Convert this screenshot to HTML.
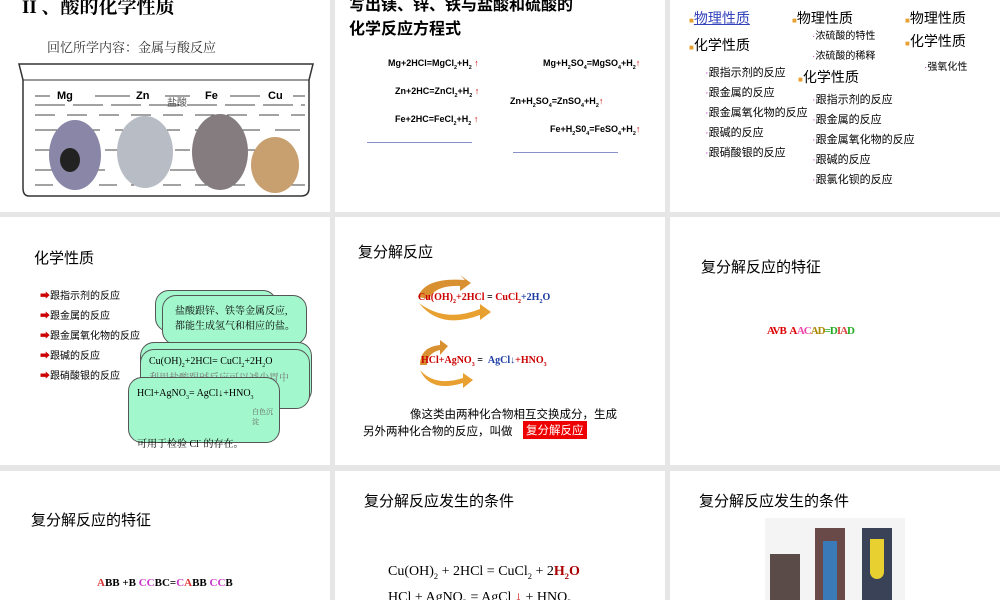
<!DOCTYPE html>
<html><head><meta charset="utf-8"><style>
body{margin:0;width:1000px;height:600px;background:#e6e6e6;position:relative;overflow:hidden;font-family:"Liberation Sans","Noto Sans CJK SC",sans-serif;}
.p{position:absolute;background:#fff;overflow:hidden}
.a{position:absolute;white-space:nowrap}
.serif{font-family:"Liberation Serif","Noto Serif CJK SC",serif}
sub{font-size:60%}
.bub{position:absolute;background:#a3f7cc;border:1px solid #555;border-radius:14px}
</style></head><body>
<!-- row1 -->
<div class="p" style="left:0;top:0;width:330px;height:212px">
 <div class="a serif" style="left:22px;top:-8px;font-size:19px;font-weight:bold">II 、酸的化学性质</div>
 <div class="a serif" style="left:47px;top:37px;font-size:13px;color:#333">回忆所学内容：金属与酸反应</div>
 <svg class="a" style="left:15px;top:60px" width="300" height="140">
  <path d="M4 4 L298 4 L294 20 L294 128 Q294 136 286 136 L14 136 Q8 136 8 128 L8 20 Z" fill="#fff" stroke="#333" stroke-width="1.5"/>
  <line x1="8" y1="20" x2="294" y2="20" stroke="#333"/>
  <g stroke="#444" stroke-width="1">
   <line x1="20" y1="36" x2="35" y2="36"/><line x1="80" y1="36" x2="115" y2="36"/><line x1="150" y1="36" x2="175" y2="36"/><line x1="215" y1="36" x2="245" y2="36"/><line x1="278" y1="36" x2="290" y2="36"/>
   <line x1="20" y1="45" x2="290" y2="45" stroke-dasharray="30 8"/><line x1="20" y1="55" x2="290" y2="55" stroke-dasharray="20 12"/>
   <line x1="20" y1="70" x2="290" y2="70" stroke-dasharray="25 15"/><line x1="20" y1="90" x2="290" y2="90" stroke-dasharray="15 20"/><line x1="20" y1="110" x2="290" y2="110" stroke-dasharray="25 20"/><line x1="20" y1="125" x2="290" y2="125" stroke-dasharray="18 14"/>
  </g>
  <text x="42" y="39" font-size="11" font-weight="bold" font-family="Liberation Sans">Mg</text>
  <text x="121" y="39" font-size="11" font-weight="bold" font-family="Liberation Sans">Zn</text>
  <text x="190" y="39" font-size="11" font-weight="bold" font-family="Liberation Sans">Fe</text>
  <text x="253" y="39" font-size="11" font-weight="bold" font-family="Liberation Sans">Cu</text>
  <text x="152" y="46" font-size="10" fill="#555" font-family="Noto Sans CJK SC">盐酸</text>
  <ellipse cx="60" cy="95" rx="26" ry="35" fill="#8a86a8"/>
  <ellipse cx="130" cy="92" rx="28" ry="36" fill="#b8bcc4"/>
  <ellipse cx="205" cy="92" rx="28" ry="38" fill="#857c80"/>
  <ellipse cx="260" cy="105" rx="24" ry="28" fill="#c8a070"/>
  <ellipse cx="55" cy="100" rx="10" ry="12" fill="#222"/>
 </svg>
</div>
<div class="p" style="left:335px;top:0;width:330px;height:212px">
 <div class="a" style="left:14px;top:-6px;font-size:16px;font-weight:bold;line-height:24px">写出镁、锌、铁与盐酸和硫酸的<br>化学反应方程式</div>
 <div class="a" style="left:53px;top:58px;font-size:9px;font-weight:bold">Mg+2HCl=MgCl<sub>2</sub>+H<sub>2</sub> <span style="color:#c00">↑</span></div>
 <div class="a" style="left:208px;top:58px;font-size:9px;font-weight:bold">Mg+H<sub>2</sub>SO<sub>4</sub>=MgSO<sub>4</sub>+H<sub>2</sub><span style="color:#c00">↑</span></div>
 <div class="a" style="left:60px;top:86px;font-size:9px;font-weight:bold">Zn+2HC=ZnCl<sub>2</sub>+H<sub>2</sub> <span style="color:#c00">↑</span></div>
 <div class="a" style="left:175px;top:96px;font-size:9px;font-weight:bold">Zn+H<sub>2</sub>SO<sub>4</sub>=ZnSO<sub>4</sub>+H<sub>2</sub><span style="color:#c00">↑</span></div>
 <div class="a" style="left:60px;top:114px;font-size:9px;font-weight:bold">Fe+2HC=FeCl<sub>2</sub>+H<sub>2</sub> <span style="color:#c00">↑</span></div>
 <div class="a" style="left:215px;top:124px;font-size:9px;font-weight:bold">Fe+H<sub>2</sub>S0<sub>4</sub>=FeSO<sub>4</sub>+H<sub>2</sub><span style="color:#c00">↑</span></div>
 <div class="a" style="left:32px;top:142px;width:105px;height:1px;background:#8890c8"></div>
 <div class="a" style="left:178px;top:152px;width:105px;height:1px;background:#8890c8"></div>
</div>
<div class="p" style="left:670px;top:0;width:330px;height:212px;font-size:14px">
 <div class="a" style="left:19px;top:8px;font-size:14px"><span style="color:#e8a030;font-size:8px">■</span><span style="color:#3344bb;text-decoration:underline">物理性质</span></div>
 <div class="a" style="left:19px;top:35px"><span style="color:#e8a030;font-size:8px">■</span>化学性质</div>
 <div class="a" style="left:35px;top:63px;font-size:11px;line-height:20px"><span style="color:#c4c">·</span>跟指示剂的反应<br><span style="color:#c4c">·</span>跟金属的反应<br><span style="color:#c4c">·</span>跟金属氧化物的反应<br><span style="color:#c4c">·</span>跟碱的反应<br><span style="color:#c4c">·</span>跟硝酸银的反应</div>
 <div class="a" style="left:122px;top:8px"><span style="color:#e8a030;font-size:8px">■</span>物理性质</div>
 <div class="a" style="left:142px;top:27px;font-size:10px;line-height:20px"><span style="color:#c4c">·</span>浓硫酸的特性<br><span style="color:#c4c">·</span>浓硫酸的稀释</div>
 <div class="a" style="left:128px;top:67px"><span style="color:#e8a030;font-size:8px">■</span>化学性质</div>
 <div class="a" style="left:142px;top:90px;font-size:11px;line-height:20px"><span style="color:#c4c">·</span>跟指示剂的反应<br><span style="color:#c4c">·</span>跟金属的反应<br><span style="color:#c4c">·</span>跟金属氧化物的反应<br><span style="color:#c4c">·</span>跟碱的反应<br><span style="color:#c4c">·</span>跟氯化钡的反应</div>
 <div class="a" style="left:235px;top:8px"><span style="color:#e8a030;font-size:8px">■</span>物理性质</div>
 <div class="a" style="left:235px;top:31px"><span style="color:#e8a030;font-size:8px">■</span>化学性质</div>
 <div class="a" style="left:254px;top:58px;font-size:10px"><span style="color:#c4c">·</span>强氧化性</div>
</div>
<!-- row2 -->
<div class="p" style="left:0;top:217px;width:330px;height:248px">
 <div class="a" style="left:34px;top:30px;font-size:15px">化学性质</div>
 <div class="a" style="left:40px;top:70px;font-size:10px;line-height:20px"><span style="color:#c00">➡</span>跟指示剂的反应<br><span style="color:#c00">➡</span>跟金属的反应<br><span style="color:#c00">➡</span>跟金属氧化物的反应<br><span style="color:#c00">➡</span>跟碱的反应<br><span style="color:#c00">➡</span>跟硝酸银的反应</div>
 <div class="bub" style="left:155px;top:73px;width:120px;height:40px"></div>
 <div class="bub serif" style="left:162px;top:78px;width:145px;height:50px;font-size:10px;line-height:15px;padding:8px 0 0 12px;box-sizing:border-box">盐酸跟锌、铁等金属反应,<br>都能生成氢气和相应的盐。</div>
 <div class="bub" style="left:140px;top:125px;width:170px;height:60px"></div>
 <div class="bub serif" style="left:140px;top:132px;width:170px;height:60px;font-size:10px;padding:6px 0 0 8px;box-sizing:border-box">Cu(OH)<sub>2</sub>+2HCl= CuCl<sub>2</sub>+2H<sub>2</sub>O<br><span style="color:#777">利用盐酸跟碱反应可以减少胃中</span></div>
 <div class="bub serif" style="left:128px;top:160px;width:152px;height:66px;font-size:10px;padding:10px 0 0 8px;box-sizing:border-box">HCl+AgNO<sub>3</sub>= AgCl↓+HNO<sub>3</sub><div style="font-size:7px;color:#666;margin:6px 0 0 115px">白色沉淀</div><div style="margin-top:8px">可用于检验 Cl<sup style="font-size:6px">-</sup> 的存在。</div></div>
</div>
<div class="p" style="left:335px;top:217px;width:330px;height:248px">
 <div class="a" style="left:23px;top:24px;font-size:15px">复分解反应</div>
 <svg class="a" style="left:80px;top:58px" width="90" height="120">
  <path d="M50 5 Q10 2 3 22 L14 24 Q20 10 45 11 L45 16 L56 8 L45 0 Z" fill="#d89030"/>
  <path d="M4 28 Q30 48 65 34 L65 29 L76 37 L65 45 L65 40 Q25 55 4 28 Z" fill="#e8a030"/>
  <path d="M5 90 Q5 72 25 70 L25 65 L33 71 L25 80 L25 75 Q12 78 12 90 Z" fill="#d89030"/>
  <path d="M5 95 Q20 112 48 103 L48 98 L58 105 L48 113 L48 108 Q15 118 5 95 Z" fill="#e8a030"/>
 </svg>
 <div class="a serif" style="left:83px;top:75px;font-size:10px;font-weight:bold"><span style="color:#c00">Cu(OH)<sub>2</sub>+2HCl</span> = <span style="color:#c00">CuCl<sub>2</sub></span><span style="color:#1a3aa0">+2H<sub>2</sub>O</span></div>
 <div class="a serif" style="left:86px;top:138px;font-size:10px;font-weight:bold"><span style="color:#c00">HCl+AgNO<sub>3</sub></span> = &nbsp;<span style="color:#1a3aa0">AgCl↓</span><span style="color:#c00">+HNO<sub>3</sub></span></div>
 <div class="a" style="left:75px;top:189px;font-size:11.5px">像这类由两种化合物相互交换成分，生成</div>
 <div class="a" style="left:28px;top:206px;font-size:11.5px">另外两种化合物的反应，叫做</div>
 <div class="a" style="left:188px;top:204px;font-size:11.5px;background:#e00;color:#fff;padding:1px 3px">复分解反应</div>
</div>
<div class="p" style="left:670px;top:217px;width:330px;height:248px">
 <div class="a" style="left:31px;top:39px;font-size:15px">复分解反应的特征</div>
 <div class="a serif" style="left:97px;top:108px;font-size:11px;font-weight:bold;letter-spacing:-1px"><span style="color:#d00">AVB</span> &nbsp;<span style="color:#d00">A</span> <span style="color:#e4a">AC</span><span style="color:#a80">AD</span><span style="color:#2a2">=D</span><span style="color:#d44">IA</span><span style="color:#2a2">D</span></div>
</div>
<!-- row3 -->
<div class="p" style="left:0;top:471px;width:330px;height:129px">
 <div class="a" style="left:31px;top:38px;font-size:15px">复分解反应的特征</div>
 <div class="a serif" style="left:97px;top:106px;font-size:11px;font-weight:bold;letter-spacing:0px"><span style="color:#d33">A</span>BB +B <span style="color:#c3c">CC</span>BC=<span style="color:#c3c">C</span><span style="color:#d33">A</span>BB <span style="color:#c3c">CC</span>B</div>
</div>
<div class="p" style="left:335px;top:471px;width:330px;height:129px">
 <div class="a" style="left:29px;top:19px;font-size:15px">复分解反应发生的条件</div>
 <div class="a serif" style="left:53px;top:93px;font-size:14px">Cu(OH)<sub>2</sub> + 2HCl = CuCl<sub>2</sub> + 2<b style="color:#a00">H<sub>2</sub>O</b></div>
 <div class="a serif" style="left:53px;top:119px;font-size:14px">HCl + AgNO<sub>3</sub> = AgCl <span style="color:#c00">↓</span> + HNO<sub>3</sub></div>
</div>
<div class="p" style="left:670px;top:471px;width:330px;height:129px">
 <div class="a" style="left:29px;top:19px;font-size:15px">复分解反应发生的条件</div>
 <div class="a" style="left:95px;top:47px;width:140px;height:90px;background:#f4f4f4"></div>
 <div class="a" style="left:100px;top:83px;width:30px;height:60px;background:#5a4a48"></div>
 <div class="a" style="left:145px;top:57px;width:30px;height:80px;background:#6a4a48"></div>
 <div class="a" style="left:153px;top:70px;width:14px;height:60px;background:#3a7ab8"></div>
 <div class="a" style="left:192px;top:57px;width:30px;height:80px;background:#3a4258"></div>
 <div class="a" style="left:200px;top:68px;width:14px;height:40px;background:#e8d030;border-radius:0 0 7px 7px"></div>
</div>
</body></html>
